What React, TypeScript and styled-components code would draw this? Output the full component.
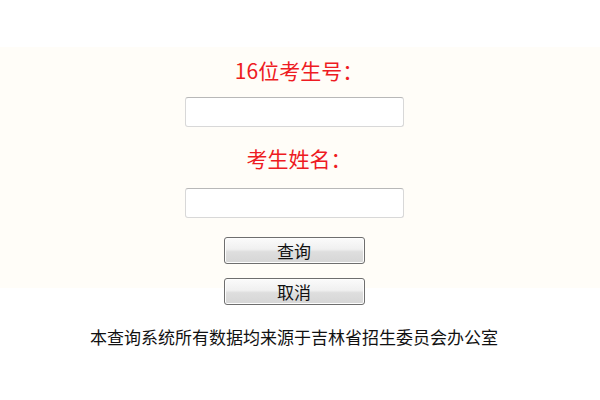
import React from 'react';
import styled, { createGlobalStyle } from 'styled-components';

const GlobalStyle = createGlobalStyle`
  html, body {
    margin: 0;
    padding: 0;
    background: #ffffff;
  }
  body {
    font-family: "Noto Sans CJK SC", "Noto Sans", sans-serif;
  }
`;

// the faint cream strip behind the form
const Page = styled.div`
  width: 600px;
  height: 400px;
  padding-top: 58px;
  box-sizing: border-box;
  overflow: hidden;
  background: linear-gradient(
    to bottom,
    #ffffff 0,
    #ffffff 47px,
    #fffdf8 47px,
    #fffdf8 288px,
    #ffffff 288px
  );
`;

const Column = styled.div`
  width: 588px;
  display: flex;
  flex-direction: column;
  align-items: center;
`;

const Label = styled.div<{ $gap?: number }>`
  margin-top: ${(p) => p.$gap ?? 0}px;
  color: #ee1b22;
  font-size: 21px;
  line-height: 24px;
  height: 24px;
  padding-left: 10px;
`;

const Field = styled.input<{ $gap?: number }>`
  margin-top: ${(p) => p.$gap ?? 0}px;
  width: 219px;
  height: 30px;
  box-sizing: border-box;
  border: 1px solid #d8d8d8;
  border-top-color: #b8b8b8;
  border-radius: 3px;
  background: #ffffff;
  outline: none;
  font-family: inherit;
  font-size: 14px;
  padding: 0 6px;
`;

const Button = styled.button<{ $gap?: number }>`
  margin-top: ${(p) => p.$gap ?? 0}px;
  width: 141px;
  height: 27px;
  box-sizing: border-box;
  border: 1px solid #6e6e6e;
  border-radius: 3px;
  background: linear-gradient(#fbfbfb 0%, #f0f0f0 45%, #dedede 55%, #d6d6d6 100%);
  box-shadow: inset 0 0 0 1px #fdfdfd;
  font-family: inherit;
  font-size: 17px;
  font-weight: 400;
  line-height: 25px;
  color: #111111;
  padding: 0;
`;

const Note = styled.div`
  margin-top: 22px;
  font-size: 17px;
  line-height: 20px;
  color: #111111;
`;

export default function App() {
  return (
    <>
      <GlobalStyle />
      <Page>
        <Column>
          <Label>16位考生号：</Label>
          <Field $gap={15} type="text" />
          <Label $gap={19}>考生姓名：</Label>
          <Field $gap={18} type="text" />
          <Button $gap={19}>查询</Button>
          <Button $gap={14}>取消</Button>
          <Note>本查询系统所有数据均来源于吉林省招生委员会办公室</Note>
        </Column>
      </Page>
    </>
  );
}
